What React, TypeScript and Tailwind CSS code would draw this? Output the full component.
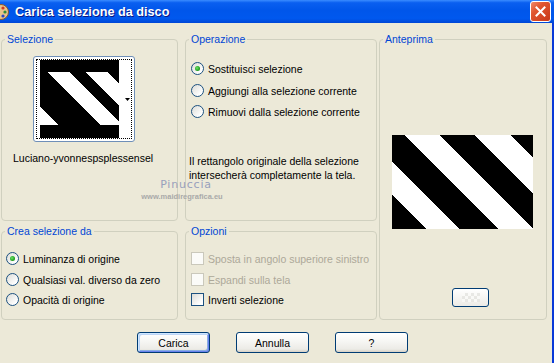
import type { ReactNode } from 'react';

function Group({ title, className, children }: { title: string; className: string; children?: ReactNode }) {
  return (
    <fieldset className={`rounded-[4px] border border-[#D0D0BF] ${className}`}>
      <legend className="ml-[3px] px-[2px] leading-[12px] text-[#0046D5]">{title}</legend>
      {children}
    </fieldset>
  );
}

function Radio({ checked = false }: { checked?: boolean }) {
  return (
    <span className="flex h-[13px] w-[13px] shrink-0 items-center justify-center rounded-full border border-[#1C5180] bg-[linear-gradient(135deg,#DCDCD7,#FFFFFF_80%)]">
      {checked && (
        <span className="h-[5px] w-[5px] rounded-full bg-[radial-gradient(circle_at_40%_40%,#6EE36A,#21A121_60%,#1A841A)]" />
      )}
    </span>
  );
}

function Check({ disabled = false }: { disabled?: boolean }) {
  return disabled ? (
    <span className="h-[13px] w-[13px] shrink-0 border border-[#CAC8BB] bg-[#FBFBF8]" />
  ) : (
    <span className="h-[13px] w-[13px] shrink-0 border border-[#1C5180] bg-[linear-gradient(135deg,#DCDCD7,#FFFFFF_80%)]" />
  );
}

function Option({ control, label, disabled = false, className }: { control: ReactNode; label: string; disabled?: boolean; className: string }) {
  return (
    <div className={`flex h-[13px] items-center gap-[4px] ${className}`}>
      {control}
      <span className={disabled ? 'text-[#ACA899]' : 'text-black'}>{label}</span>
    </div>
  );
}

function XpButton({ label, isDefault = false }: { label: string; isDefault?: boolean }) {
  return (
    <button
      className={`flex h-[21px] w-[73px] items-center justify-center rounded-[3px] border border-[#003C74] bg-[linear-gradient(180deg,#FFFFFF_0%,#F6F6F3_45%,#ECEBE6_85%,#D6D0C5_100%)] text-[10.5px] text-black ${
        isDefault ? 'shadow-[inset_1px_1px_0_#CEE7FF,inset_-1px_-1px_0_#6982EE,inset_2px_2px_0_#BCD4F6,inset_-2px_-2px_0_#89ADE4]' : ''
      }`}
    >
      {label}
    </button>
  );
}

function Thumb() {
  return (
    <svg width="79" height="78" viewBox="0 0 79 78" shapeRendering="crispEdges">
      <rect width="79" height="78" fill="#000" />
      <svg x="0" y="12" width="79" height="53" viewBox="0 12 79 53">
        <polygon points="-100,-155 200,145 200,167 -100,-133" fill="#fff" />
        <polygon points="-100,-117 200,183 200,205 -100,-95" fill="#fff" />
        <polygon points="-100,-53 200,247 200,400 -100,100" fill="#fff" />
      </svg>
    </svg>
  );
}

function Preview() {
  return (
    <svg width="141" height="94" viewBox="0 0 141 94" shapeRendering="crispEdges">
      <rect width="141" height="94" fill="#000" />
      <polygon points="-100,-218 300,182 300,218 -100,-182" fill="#fff" />
      <polygon points="-100,-147 300,253 300,288 -100,-112" fill="#fff" />
      <polygon points="-100,-73 300,327 300,360 -100,-40" fill="#fff" />
    </svg>
  );
}

export default function App() {
  return (
    <div className="relative h-[363px] w-[554px] overflow-hidden bg-[#ECE9D8] font-['Liberation_Sans',Arial,sans-serif] text-[10.5px] leading-[12px] text-black">
      {/* Title bar */}
      <div className="flex h-[23px] items-center bg-[linear-gradient(180deg,#3A8CFF_0%,#0A5FF0_12%,#0056EA_45%,#0058EE_80%,#0047D6_100%)]">
        <svg width="10" height="18" viewBox="0 0 10 18" className="shrink-0">
          <circle cx="1" cy="9" r="7.5" fill="#E8C48C" stroke="#8A5A2A" strokeWidth="1" />
          <circle cx="3" cy="5" r="1.6" fill="#D23A1E" />
          <circle cx="5" cy="9" r="1.6" fill="#2E8B3A" />
          <circle cx="3" cy="13" r="1.6" fill="#2846C8" />
        </svg>
        <span className="ml-[5px] font-['Liberation_Sans',Arial,sans-serif] text-[12.7px] font-bold text-white [text-shadow:1px_1px_#0A1883]">
          Carica selezione da disco
        </span>
        <div className="ml-auto mr-[3px] flex h-[21px] w-[21px] items-center justify-center rounded-[3px] border border-white bg-[linear-gradient(135deg,#F08A6A_0%,#E0552F_35%,#C8391A_100%)]">
          <svg width="11" height="11" viewBox="0 0 11 11">
            <path d="M1.5 1.5 L9.5 9.5 M9.5 1.5 L1.5 9.5" stroke="#fff" strokeWidth="2" strokeLinecap="square" />
          </svg>
        </div>
      </div>

      {/* Body */}
      <div className="flex h-[340px] flex-col border-r-2 border-[#0838D8]">
        <div className="flex pl-[1px] pt-[10px]">
          {/* Left column */}
          <div className="flex w-[177px] flex-col gap-[4px]">
            <Group title="Selezione" className="h-[188px]">
              <div className="ml-[31px] mt-[11px] h-[86px] w-[102px] rounded-[3px] border border-[#6F8FB8] bg-white p-[2px]">
                <div className="flex h-full w-full items-center border border-dotted border-black">
                  <div className="ml-[3px] self-start">
                    <Thumb />
                  </div>
                  <svg width="5" height="3" viewBox="0 0 5 3" className="ml-auto mr-[1px]">
                    <polygon points="0,0 5,0 2.5,3" fill="#000" />
                  </svg>
                </div>
              </div>
              <div className="ml-[11px] mt-[10px]">Luciano-yvonnespsplessensel</div>
            </Group>
            <Group title="Crea selezione da" className="h-[95px]">
              <Option className="ml-[4px] mt-[15px]" control={<Radio checked />} label="Luminanza di origine" />
              <Option className="ml-[4px] mt-[8px]" control={<Radio />} label="Qualsiasi val. diverso da zero" />
              <Option className="ml-[4px] mt-[7px]" control={<Radio />} label="Opacità di origine" />
            </Group>
          </div>

          {/* Middle column */}
          <div className="ml-[7px] flex w-[192px] flex-col gap-[4px]">
            <Group title="Operazione" className="h-[188px]">
              <Option className="ml-[5px] mt-[17px]" control={<Radio checked />} label="Sostituisci selezione" />
              <Option className="ml-[5px] mt-[9px]" control={<Radio />} label="Aggiungi alla selezione corrente" />
              <Option className="ml-[5px] mt-[8px]" control={<Radio />} label="Rimuovi dalla selezione corrente" />
              <p className="ml-[3px] mt-[36px] leading-[14px]">
                Il rettangolo originale della selezione
                <br />
                intersecherà completamente la tela.
              </p>
            </Group>
            <Group title="Opzioni" className="h-[95px]">
              <Option className="ml-[5px] mt-[15px]" control={<Check disabled />} label="Sposta in angolo superiore sinistro" disabled />
              <Option className="ml-[5px] mt-[8px]" control={<Check disabled />} label="Espandi sulla tela" disabled />
              <Option className="ml-[5px] mt-[7px]" control={<Check />} label="Inverti selezione" />
            </Group>
          </div>

          {/* Right column */}
          <div className="ml-[2px] w-[168px]">
            <Group title="Anteprima" className="h-[287px]">
              <div className="ml-[12px] mt-[90px] h-[94px] w-[141px]">
                <Preview />
              </div>
              <div className="ml-[72px] mt-[59px] flex h-[19px] w-[37px] items-center justify-center rounded-[3px] border border-[#003C74] bg-[linear-gradient(180deg,#FFFFFF,#ECEBE6)]">
                <div className="h-[9px] w-[18px] bg-[repeating-conic-gradient(#E4E4E0_0%_25%,#FAFAF8_0%_50%)] bg-[length:6px_6px] opacity-80" />
              </div>
            </Group>
          </div>
        </div>

        {/* Buttons */}
        <div className="mt-[12px] flex gap-[26px] pl-[137px]">
          <XpButton label="Carica" isDefault />
          <XpButton label="Annulla" />
          <XpButton label="?" />
        </div>
      </div>

      {/* Watermark */}
      <div className="pointer-events-none absolute left-[139px] top-[180px] flex w-[86px] flex-col items-center">
        <span className="ml-[8px] font-['DejaVu_Sans',sans-serif] text-[11px] leading-[9px] tracking-[0.8px] text-[#98A0BC]">Pinuccia</span>
        <span className="mt-[4px] font-['Liberation_Sans',sans-serif] text-[7.5px] font-bold leading-[8px] text-[#A9A9A9]">www.maidiregrafica.eu</span>
      </div>
    </div>
  );
}
